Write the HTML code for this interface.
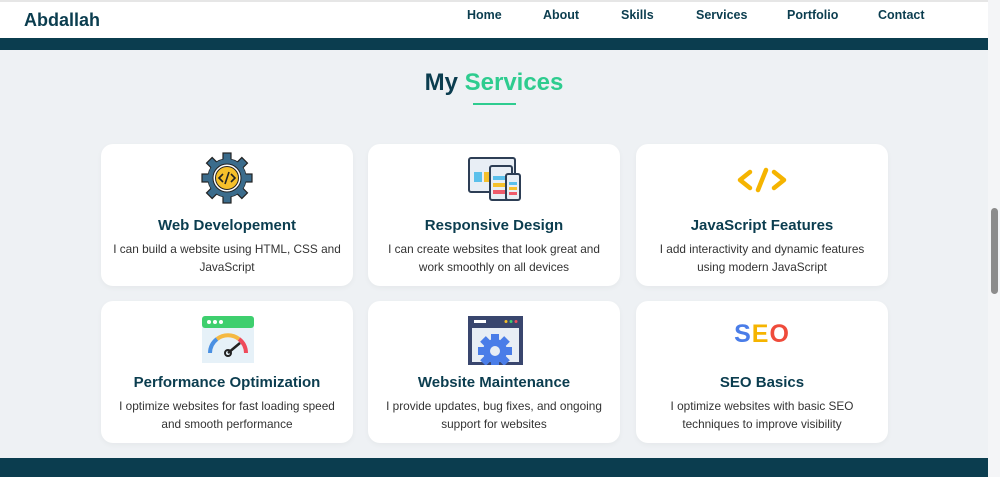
<!DOCTYPE html>
<html><head><style>
*{margin:0;padding:0;box-sizing:border-box}
body{width:1000px;height:477px;overflow:hidden;font-family:"Liberation Sans",Arial,sans-serif;background:#eef1f4;position:relative}
.hdr{position:absolute;left:0;top:0;width:988px;height:38px;background:#fff;border-top:2px solid #e6e6e6}
.logo{position:absolute;left:24px;top:8px;font-size:18px;font-weight:bold;color:#0b3d4f}
.nav a{position:absolute;top:6px;font-size:12.5px;font-weight:bold;color:#0b3d4f;text-decoration:none}
.band{position:absolute;left:0;width:988px;background:#0b3d4f}
.title{position:absolute;left:0;width:988px;top:69px;text-align:center;font-size:24px;font-weight:bold;color:#0b3d4f}
.title span{color:#2ecc8f}
.ul{position:absolute;left:473px;top:103px;width:43px;height:2px;background:#2ecc8f}
.card{position:absolute;width:252px;height:142px;background:#fff;border-radius:12px;text-align:center;box-shadow:0 2px 6px rgba(0,0,0,.04)}
.card h3{position:absolute;top:73px;width:100%;font-size:15px;color:#0b3d4f}
.card p{position:absolute;top:96px;left:12px;right:12px;font-size:11.8px;line-height:18px;color:#333}
.card svg{position:absolute;left:100px;top:8px}
.sb{position:absolute;left:988px;top:0;width:12px;height:477px;background:#f4f5f7}
.th{position:absolute;left:991px;top:208px;width:7px;height:86px;background:#8c8c8c;border-radius:4px}
</style></head><body>
<div class="hdr"><div class="logo">Abdallah</div>
<div class="nav"><a style="left:467px">Home</a><a style="left:543px">About</a><a style="left:621px">Skills</a><a style="left:696px">Services</a><a style="left:787px">Portfolio</a><a style="left:878px">Contact</a></div></div>
<div class="band" style="top:38px;height:12px"></div>
<div class="band" style="top:458px;height:19px"></div>
<div class="title">My <span>Services</span></div>
<div class="ul"></div>

<div class="card" style="left:101px;top:144px">
<svg width="52" height="52" viewBox="0 0 52 52"><g transform="translate(26,26)"><g fill="#3b6c8c" stroke="#222" stroke-width="1.2"><circle r="19"/><g id="t"><rect x="-4" y="-25" width="8" height="8"/></g><use href="#t" transform="rotate(45)"/><use href="#t" transform="rotate(90)"/><use href="#t" transform="rotate(135)"/><use href="#t" transform="rotate(180)"/><use href="#t" transform="rotate(225)"/><use href="#t" transform="rotate(270)"/><use href="#t" transform="rotate(315)"/></g><circle r="19" fill="#3b6c8c"/><circle r="14" fill="#fff" stroke="#222"/><circle r="11.5" fill="#f5c02b" stroke="#222"/><path d="M-4-4l-4 4 4 4M4-4l4 4-4 4M2-6l-4 12" stroke="#222" stroke-width="1.6" fill="none"/></g></svg>
<h3>Web Developement</h3><p>I can build a website using HTML, CSS and JavaScript</p></div>

<div class="card" style="left:368px;top:144px">
<svg width="56" height="52" viewBox="0 0 56 52"><rect x="1" y="6" width="46" height="34" rx="2" fill="#e8eef5" stroke="#2d3e55" stroke-width="2"/><rect x="6" y="20" width="8" height="10" fill="#5bc0eb"/><rect x="16" y="20" width="8" height="10" fill="#f5c02b"/><rect x="22" y="14" width="22" height="34" rx="2" fill="#e8eef5" stroke="#2d3e55" stroke-width="2"/><rect x="25" y="24" width="14" height="4" fill="#5bc0eb"/><rect x="25" y="31" width="14" height="4" fill="#f5c02b"/><rect x="25" y="38" width="14" height="4" fill="#ef5b6b"/><rect x="38" y="22" width="14" height="26" rx="2" fill="#e8eef5" stroke="#2d3e55" stroke-width="2"/><rect x="41" y="30" width="8" height="3" fill="#5bc0eb"/><rect x="41" y="35" width="8" height="3" fill="#f5c02b"/><rect x="41" y="40" width="8" height="3" fill="#ef5b6b"/></svg>
<h3>Responsive Design</h3><p>I can create websites that look great and work smoothly on all devices</p></div>

<div class="card" style="left:636px;top:144px">
<svg width="52" height="52" viewBox="0 0 52 52"><path d="M14 20l-10 8 10 8M38 20l10 8-10 8M30 18l-8 20" stroke="#f5b400" stroke-width="4.5" fill="none" stroke-linecap="round" stroke-linejoin="round"/></svg>
<h3>JavaScript Features</h3><p>I add interactivity and dynamic features using modern JavaScript</p></div>

<div class="card" style="left:101px;top:301px">
<svg width="54" height="54" viewBox="0 0 54 54"><rect x="1" y="7" width="52" height="50" rx="3" fill="#e6f1f8"/><rect x="1" y="7" width="52" height="12" rx="3" fill="#3ecf6e"/><circle cx="8" cy="13" r="2" fill="#fff"/><circle cx="14" cy="13" r="2" fill="#fff"/><circle cx="20" cy="13" r="2" fill="#fff"/><path d="M9 44a18 18 0 0 1 7-14" stroke="#4a90e2" stroke-width="4" fill="none"/><path d="M16 30a18 18 0 0 1 22 0" stroke="#f5b942" stroke-width="4" fill="none"/><path d="M38 30a18 18 0 0 1 7 14" stroke="#ef4b5b" stroke-width="4" fill="none"/><path d="M27 44l12-10" stroke="#222" stroke-width="2.5"/><circle cx="27" cy="44" r="3" fill="none" stroke="#222" stroke-width="2"/></svg>
<h3>Performance Optimization</h3><p>I optimize websites for fast loading speed and smooth performance</p></div>

<div class="card" style="left:368px;top:301px">
<svg width="56" height="56" viewBox="0 0 56 56"><rect x="0" y="7" width="55" height="50" fill="#39466e"/><rect x="4" y="19" width="47" height="34" fill="#e8eef5"/><rect x="6" y="11" width="12" height="3" fill="#fff"/><circle cx="38" cy="12.5" r="1.5" fill="#f5c02b"/><circle cx="43" cy="12.5" r="1.5" fill="#3ecf6e"/><circle cx="48" cy="12.5" r="1.5" fill="#ef4b5b"/><g transform="translate(27,42)" fill="#4a7de8"><circle r="12"/><rect x="-4" y="-17" width="8" height="34"/><rect x="-17" y="-4" width="34" height="8"/><rect x="-4" y="-17" width="8" height="34" transform="rotate(45)"/><rect x="-4" y="-17" width="8" height="34" transform="rotate(-45)"/><circle r="5" fill="#e8eef5"/></g></svg>
<h3>Website Maintenance</h3><p>I provide updates, bug fixes, and ongoing support for websites</p></div>

<div class="card" style="left:636px;top:301px">
<div style="position:absolute;left:0;width:100%;top:19px;font-size:25px;font-weight:bold;letter-spacing:1px"><span style="color:#4a7de8">S</span><span style="color:#f5b400">E</span><span style="color:#ef4b3b">O</span></div>
<h3>SEO Basics</h3><p>I optimize websites with basic SEO techniques to improve visibility</p></div>

<div class="sb"></div><div class="th"></div>
</body></html>
